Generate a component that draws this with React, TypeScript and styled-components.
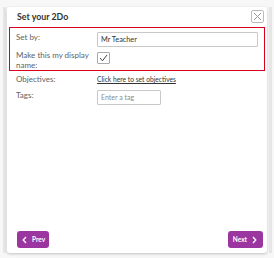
import React, { useState } from "react";
import styled, { createGlobalStyle } from "styled-components";

const GlobalStyle = createGlobalStyle`
    html, body {
        margin: 0;
        padding: 0;
        width: 274px;
        height: 258px;
        overflow: hidden;
        background-color: #F7F7F7;
        font-family: "Lato", "Open Sans", sans-serif;
    }
`

function App(){
    const [ displayName, setDisplayName ] = useState(true);
    const [ setBy, setSetBy ] = useState("Mr Teacher");
    const [ tag, setTag ] = useState("");

    return(
        <>
            <GlobalStyle/>
            <Page>
                <Strip $width={3} $left={3} $right={1}/>
                <Modal>
                    <Header>
                        <Title>Set your 2Do</Title>
                        <CloseButton aria-label="close">
                            <svg width="9" height="9" viewBox="0 0 9 9">
                                <path d="M1 1 L8 8 M8 1 L1 8" stroke="#9A9A9A" strokeWidth="1" fill="none"/>
                            </svg>
                        </CloseButton>
                    </Header>
                    <Highlight>
                        <Row>
                            <Label>Set by:</Label>
                            <TextInput value={setBy} onChange={(e) => setSetBy(e.target.value)}/>
                        </Row>
                        <Row>
                            <Label>Make this my display name:</Label>
                            <CheckBox onClick={() => setDisplayName(!displayName)}>
                                {displayName ? (
                                    <svg width="9" height="8" viewBox="0 0 9 8">
                                        <path d="M1 4 L3.5 6.8 L8 1" stroke="#444" strokeWidth="1" fill="none"/>
                                    </svg>
                                ) : null}
                            </CheckBox>
                        </Row>
                    </Highlight>
                    <Fields>
                        <Row>
                            <Label>Objectives:</Label>
                            <Link>Click here to set objectives</Link>
                        </Row>
                        <Row>
                            <Label>Tags:</Label>
                            <TagInput placeholder="Enter a tag" value={tag} onChange={(e) => setTag(e.target.value)}/>
                        </Row>
                    </Fields>
                    <Footer>
                        <NavButton $padding="0 4px 0 5px">
                            <svg width="5" height="8" viewBox="0 0 5 8">
                                <path d="M4 1 L1.2 4 L4 7" stroke="#FFFFFF" strokeWidth="1.3" fill="none"/>
                            </svg>
                            <span>Prev</span>
                        </NavButton>
                        <NavButton $padding="0 6px 0 5px">
                            <span>Next</span>
                            <svg width="5" height="8" viewBox="0 0 5 8">
                                <path d="M1 1 L3.8 4 L1 7" stroke="#FFFFFF" strokeWidth="1.3" fill="none"/>
                            </svg>
                        </NavButton>
                    </Footer>
                </Modal>
                <Strip $width={3} $left={2} $right={2}/>
            </Page>
        </>
    );
}

const Page = styled.div`
    display: flex;
    width: 274px;
    height: 258px;
    padding: 7px 0 5px 0;
    box-sizing: border-box;
`

const Strip = styled.div<{ $width: number; $left: number; $right: number }>`
    width: ${(p) => p.$width}px;
    margin: 0 ${(p) => p.$right}px 0 ${(p) => p.$left}px;
    background-color: #E6E6E6;
`

const Modal = styled.div`
    display: flex;
    flex-direction: column;
    flex: 1;
    background-color: #FFFFFF;
    border-radius: 3px;
    box-shadow: 0px 1px 3px rgba(0,0,0,0.22);
`

const Header = styled.div`
    display: flex;
    justify-content: space-between;
    align-items: center;
    padding: 3px 3px 0 10px;
`

const Title = styled.div`
    font-size: 8.8px;
    font-weight: 700;
    color: #333333;
`

const CloseButton = styled.button`
    display: flex;
    align-items: center;
    justify-content: center;
    width: 13px;
    height: 13px;
    padding: 0;
    background-color: #FFFFFF;
    border: 1px solid #BBBBBB;
    border-radius: 2px;
`

const Highlight = styled.div`
    display: flex;
    flex-direction: column;
    gap: 3px;
    margin: 4px 2px 0 2px;
    padding: 4px 6px 0 6px;
    border: 1px solid #D9001B;
`

const Fields = styled.div`
    display: flex;
    flex-direction: column;
    gap: 5px;
    padding: 3px 0 0 9px;
`

const Row = styled.div`
    display: flex;
    align-items: flex-start;
`

const Label = styled.div`
    width: 81px;
    font-size: 8px;
    line-height: 9.5px;
    color: #626262;
    padding-top: 1px;
`

const TextInput = styled.input`
    flex: 1;
    height: 15px;
    box-sizing: border-box;
    border: 1px solid #C8C8C8;
    border-radius: 1px;
    padding: 0 3px;
    font-family: inherit;
    font-size: 7.3px;
    color: #333333;
    outline: none;
`

const TagInput = styled(TextInput)`
    flex: none;
    width: 64px;
    font-size: 7px;
    &::placeholder {
        color: #8A8A8A;
    }
`

const CheckBox = styled.div`
    display: flex;
    align-items: center;
    justify-content: center;
    width: 13px;
    height: 12px;
    box-sizing: border-box;
    border: 1px solid #AAAAAA;
    border-radius: 1px;
    margin-top: 2px;
    cursor: pointer;
`

const Link = styled.a`
    font-size: 6.7px;
    line-height: 10px;
    color: #333333;
    text-decoration: underline;
    cursor: pointer;
`

const Footer = styled.div`
    display: flex;
    justify-content: space-between;
    margin-top: auto;
    padding: 0 4px 5px 10px;
`

const NavButton = styled.button<{ $padding: string }>`
    display: flex;
    align-items: center;
    gap: 5px;
    height: 17px;
    padding: ${(p) => p.$padding};
    background-color: #9B35A0;
    border: none;
    border-radius: 3px;
    color: #FFFFFF;
    font-family: inherit;
    font-size: 6.5px;
    font-weight: 700;
    cursor: pointer;
`

export default App;
